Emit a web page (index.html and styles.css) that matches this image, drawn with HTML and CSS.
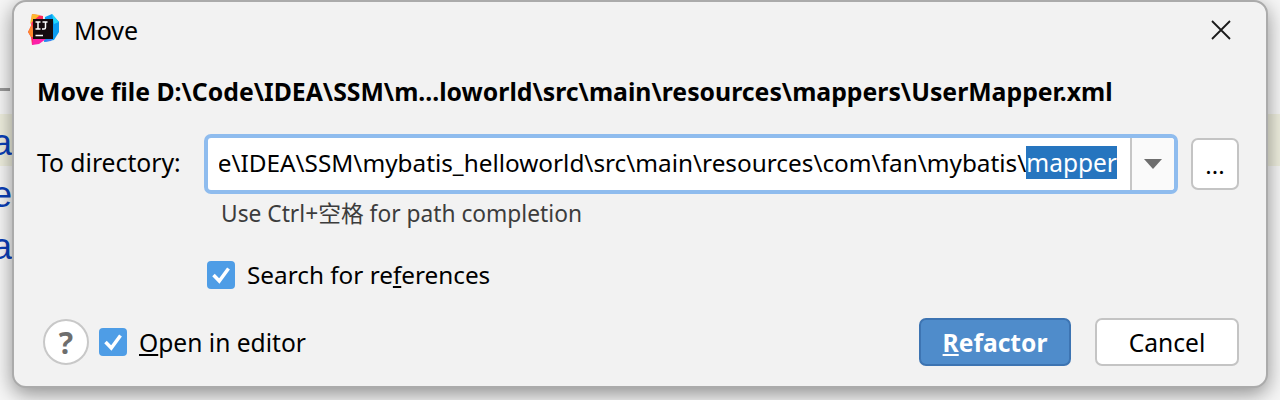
FILE: index.html
```html
<!DOCTYPE html>
<html lang="en">
<head>
<meta charset="utf-8">
<title>Move</title>
<link rel="stylesheet" href="styles.css">
</head>
<body>
<div class="backdrop-band"></div>
<div class="backdrop-rule"></div>
<div class="backdrop-letters"><span>a</span><span>e</span><span>a</span></div>
<main class="dialog">
  <header class="titlebar">
    <svg class="logo" width="34" height="34" viewBox="0 0 34 34" aria-hidden="true">
      <path d="M5 1 L16 3 L16 26 L5 32 L4 24 L1 19 L4 13 Z" fill="#fe2857"/>
      <path d="M5 1 L13 2 L6 8 L3 11 Z" fill="#fdb92e"/>
      <path d="M1 19 L5 11 L7 24 L4 24 Z" fill="#fe8a2e"/>
      <path d="M18 4 L25 1 L32 9 L32 19 L27 27 L17 29 Z" fill="#0a9cf0"/>
      <path d="M25 1 L32 9 L27 11 Z" fill="#21d7fb"/>
      <path d="M5 32 L6 26 L19 26 L12 31 Z" fill="#fc1fa8"/>
      <path d="M17 29 L27 22 L24 28 Z" fill="#3d7cf3"/>
      <rect x="6" y="6" width="20" height="20" fill="#150b0e"/>
      <path d="M8.500 9 h5 M11 9 v7 M8.500 16 h5 M15.500 9 h5 M18.500 9 v5.500 q0 1.500 -1.500 1.500 h-2 M8.500 22.500 h7.500" fill="none" stroke="#fff" stroke-width="1.500"/>
    </svg>
    <span class="title">Move</span>
    <svg class="close" width="20" height="20" viewBox="0 0 20 20" aria-hidden="true">
      <path d="M1 1 L19 19 M19 1 L1 19" stroke="#1a1a1a" stroke-width="1.800" fill="none"/>
    </svg>
  </header>

  <h1 class="heading">Move file D:\Code\IDEA\SSM\m...loworld\src\main\resources\mappers\UserMapper.xml</h1>

  <div class="dir-row">
    <label class="dir-label">To directory:</label>
    <div class="combo">
      <div class="combo-text"><span class="path">D:\Code\IDEA\SSM\mybatis_helloworld\src\main\resources\com\fan\mybatis\<span class="selected">mapper</span></span></div>
      <div class="combo-arrow"><span class="triangle"></span></div>
    </div>
    <button class="browse" type="button">...</button>
  </div>

  <p class="hint">Use Ctrl+空格 for path completion</p>

  <div class="check-row search">
    <span class="checkbox"><svg width="28" height="28" viewBox="0 0 28 28" aria-hidden="true"><path d="M6.500 14 L12.300 20 L21.500 7.500" fill="none" stroke="#fff" stroke-width="3.500"/></svg></span>
    <span class="check-label search-label">Search for re<u>f</u>erences</span>
  </div>

  <footer class="footer">
    <button class="help" type="button">?</button>
    <span class="checkbox"><svg width="28" height="28" viewBox="0 0 28 28" aria-hidden="true"><path d="M6.500 14 L12.300 20 L21.500 7.500" fill="none" stroke="#fff" stroke-width="3.500"/></svg></span>
    <span class="check-label open-label"><u>O</u>pen in editor</span>
    <button class="btn primary" type="button"><u>R</u>efactor</button>
    <button class="btn cancel" type="button">Cancel</button>
  </footer>
</main>
</body>
</html>
```
FILE: styles.css
```css
* { box-sizing: border-box; }
html, body { margin: 0; height: 400px; overflow: hidden; }
body {
  position: relative;
  padding: 0 12px;
  background: #f6f6f6;
  font-family: "Noto Sans", "Noto Sans CJK SC", sans-serif;
  color: #000;
}
.backdrop-band { position: absolute; left: 0; right: 0; top: 114px; height: 52px; background: #eeeede; }
.backdrop-rule { position: absolute; left: 0; top: 88px; width: 10px; height: 3px; background: #999; }
.backdrop-letters {
  position: absolute; left: -8px; top: 117px;
  display: flex; flex-direction: column;
  font: 36px/52px "Liberation Sans", sans-serif; color: #0a3fb8;
}
.dialog {
  position: relative;
  width: 1256px;
  height: 388px;
  background: #f2f2f2;
  border: 2px solid #ababab;
  border-radius: 14px;
  box-shadow: 0 6px 20px rgba(0, 0, 0, 0.42);
  padding: 0 27px 0 23px;
  display: flex;
  flex-direction: column;
}
.titlebar { display: flex; align-items: center; height: 58px; margin-left: -10px; }
.logo { flex: none; margin-top: -2px; }
.title { margin-left: 13px; margin-top: -2px; font-size: 25px; color: #000; }
.close { margin-left: auto; margin-right: 8px; margin-top: -2px; }
.heading { margin: 15px 0 1px; font-size: 24.800px; font-weight: 700; line-height: 32px; white-space: nowrap; }
.dir-row { display: flex; align-items: center; margin-top: 26px; height: 60px; }
.dir-label { width: 167px; flex: none; font-size: 24.700px; padding-bottom: 4px; }
.combo {
  width: 974px;
  height: 60px;
  flex: none;
  display: flex;
  background: #fff;
  border: 4px solid #8fbcee;
  border-radius: 7px;
  overflow: hidden;
}
.combo-text {
  flex: 1;
  min-width: 0;
  display: flex;
  justify-content: flex-end;
  align-items: center;
  overflow: hidden;
  padding: 0 13px 3px 0;
  margin-left: 11px;
  font-size: 24.340px;
  line-height: 33px;
  white-space: nowrap;
}
.path { flex: none; }
.selected { background: #2675bf; color: #fff; display: inline-block; height: 33px; font-size: 24.500px; vertical-align: top; }
.combo-arrow {
  width: 44px; flex: none;
  display: flex; align-items: center; justify-content: center;
  background: #fafafa;
  border-left: 2px solid #c6c6c6;
}
.triangle { width: 0; height: 0; border-left: 9px solid transparent; border-right: 9px solid transparent; border-top: 10px solid #6e6e6e; }
.browse {
  margin-left: 13px; width: 48px; height: 52px; flex: none;
  background: #fff; border: 2px solid #c4c4c4; border-radius: 7px;
  font: 24px "Noto Sans", sans-serif; color: #000; padding: 0;
}
.hint { margin: 5px 0 0 184px; font-size: 22.750px; line-height: 30px; color: #3c3c3c; white-space: nowrap; }
.check-row { display: flex; align-items: center; }
.search { margin: 30px 0 0 170px; }
.checkbox {
  width: 28px; height: 28px; flex: none;
  background: #4e9de6; border-radius: 4px;
  display: block;
}
.checkbox svg { display: block; }
.check-label { margin-left: 12px; line-height: 32px; white-space: nowrap; }
.search-label { font-size: 24.300px; }
.open-label { font-size: 24.600px; padding-top: 2px; }
.footer { display: flex; align-items: center; margin-top: 27px; padding-left: 6px; height: 48px; }
.help {
  width: 46px; height: 46px; flex: none; padding: 0;
  background: #fff; border: 2px solid #c8c8c8; border-radius: 50%;
  font: 700 30px "Noto Sans", sans-serif; color: #6e6e6e; margin-right: 10px;
}
.btn { height: 48px; flex: none; border-radius: 7px; font: 24.600px "Noto Sans", sans-serif; padding: 0; }
.primary { margin-left: auto; width: 152px; background: #4f8ccb; border: 2px solid #3d74b2; color: #fff; font-weight: 700; }
.cancel { margin-left: 24px; width: 144px; background: #fff; border: 2px solid #c4c4c4; color: #000; }
```
